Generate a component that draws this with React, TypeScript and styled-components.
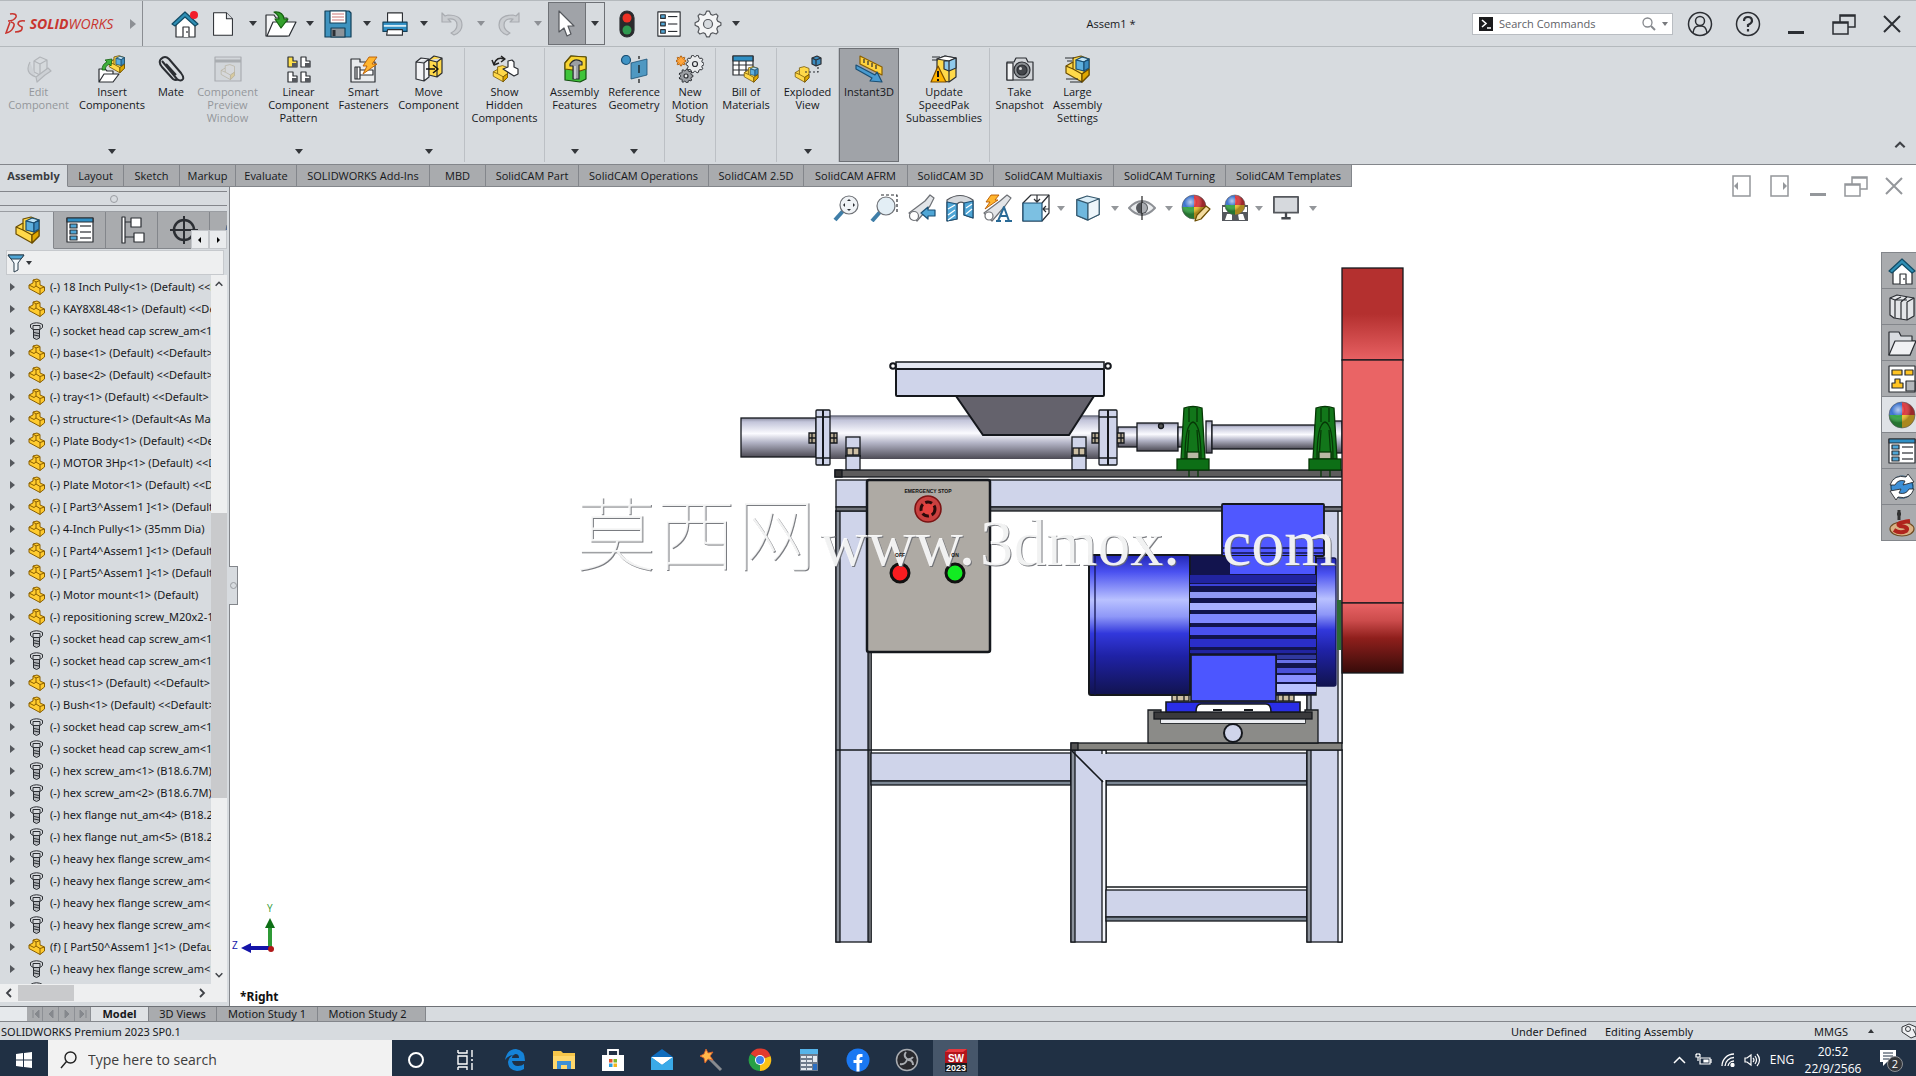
import React from "react";
import styled, { createGlobalStyle, css } from "styled-components";

const ui = `"Open Sans", "Noto Sans", "Noto Sans CJK SC", sans-serif`;
const wide = `"Noto Sans", "Open Sans", sans-serif`;

const Global = createGlobalStyle`
  * { box-sizing: border-box; }
  body { margin: 0; background: #d7dbdf; }
  button, input { font: inherit; color: inherit; }
  button { border: 0; padding: 0; background: none; }
  svg { display: block; flex: none; }
`;

const App_ = styled.div`
  height: 100vh;
  display: flex;
  flex-direction: column;
  overflow: hidden;
  font: 11px/13px ${ui};
  color: #16181b;
  background: #d7dbdf;
`;

/* ---------- title bar ---------- */
const TitleBar = styled.header`
  flex: none;
  height: 47px;
  display: flex;
  align-items: center;
  border-top: 1px solid #b4b9bd;
  border-bottom: 1px solid #b4b9bd;
`;
const Brand = styled.div`
  width: 143px;
  height: 100%;
  padding-left: 5px;
  display: flex;
  align-items: center;
  border-right: 1px solid #8a8d92;
  color: #c8352f;
  font: italic 14px/20px ${ui};
  b { font-weight: 700; }
`;
const BrandArrow = styled.span`
  margin-left: auto;
  margin-right: 6px;
  border-left: 6px solid #8d9095;
  border-top: 5px solid transparent;
  border-bottom: 5px solid transparent;
`;
const QuickBar = styled.div`
  display: flex;
  align-items: center;
  padding-left: 23px;
  height: 100%;
`;
const Quick = styled.button<{ $w: number }>`
  width: ${(p) => p.$w}px;
  height: 41px;
  display: flex;
  align-items: center;
  justify-content: center;
`;
const Caret = styled.span<{ $c?: string; $small?: boolean }>`
  display: block;
  border-top: ${(p) => (p.$small ? 4 : 5)}px solid ${(p) => p.$c || "#33363a"};
  border-left: ${(p) => (p.$small ? 3 : 4)}px solid transparent;
  border-right: ${(p) => (p.$small ? 3 : 4)}px solid transparent;
`;
const SelectBox = styled.div`
  display: flex;
  border: 1px solid #6e7176;
  margin-right: 5px;
  > :first-child { background: #a0a3a8; border-right: 1px solid #6e7176; }
`;
const DocTitle = styled.h1`
  flex: 1;
  margin: 0;
  text-align: center;
  font: 11px/13px ${ui};
`;
const SearchCommands = styled.label`
  width: 201px;
  height: 22px;
  display: flex;
  align-items: center;
  gap: 6px;
  padding: 0 4px 0 6px;
  background: #fff;
  border: 1px solid #b9bdc2;
  input {
    flex: 1;
    min-width: 0;
    border: 0;
    outline: 0;
    padding: 0;
    background: none;
  }
  input::placeholder { color: #5e6166; opacity: 1; }
`;
const WindowButtons = styled.div`
  display: flex;
  padding: 0 0 0 3px;
`;

/* ---------- ribbon ---------- */
const Ribbon = styled.div`
  flex: none;
  height: 117px;
  display: flex;
  padding: 1px 0 2px 3px;
`;
const Tool = styled.button<{ $w: number; $on?: boolean; $off?: boolean }>`
  width: ${(p) => p.$w}px;
  display: flex;
  flex-direction: column;
  align-items: center;
  padding: 7px 0 8px;
  white-space: pre;
  text-align: center;
  color: ${(p) => (p.$off ? "#94979b" : "#16181b")};
  svg { opacity: ${(p) => (p.$off ? 0.55 : 1)}; margin-bottom: 2px; }
  ${Caret} { margin-top: auto; }
  ${(p) => p.$on && css`background: #a0a3a8; outline: 1px solid #6e7176; outline-offset: -1px;`}
`;
const Sep = styled.i`
  width: 1px;
  background: #bcc0c5;
`;
const Collapse = styled.button`
  margin: auto 9px 10px auto;
`;
const TabRow = styled.div`
  flex: none;
  height: 23px;
  display: flex;
  background: #fff;
  border-top: 1px solid #83868b;
`;
const Tab = styled.button<{ $w: number; $on?: boolean }>`
  width: ${(p) => p.$w}px;
  white-space: nowrap;
  border-right: 1px solid #83868b;
  border-bottom: 1px solid #83868b;
  background: ${(p) => (p.$on ? "#d7dbdf" : "#a9abae")};
  font-weight: ${(p) => (p.$on ? 700 : 400)};
  ${(p) => p.$on && css`border-bottom-color: #d7dbdf; color: #3a3d41;`}
`;
const DocButtons = styled.div`
  margin: 9px 3px 0 auto;
  height: 24px;
  display: flex;
  z-index: 1;
`;

/* ---------- workspace ---------- */
const Workspace = styled.main`
  flex: 1;
  min-height: 0;
  display: flex;
  position: relative;
`;
const Panel = styled.aside`
  width: 230px;
  flex: none;
  display: flex;
  flex-direction: column;
  border-right: 1px solid #83868b;
  position: relative;
  padding-right: 2px;
`;
const Grip = styled.div`
  flex: none;
  height: 15px;
  margin: 4px 0 5px;
  border-top: 1px solid #83868b;
  border-bottom: 1px solid #83868b;
  display: flex;
  align-items: center;
  justify-content: center;
  &::after {
    content: "";
    width: 6px;
    height: 6px;
    border: 1px solid #9a9da2;
    border-radius: 50%;
  }
`;
const PanelTabs = styled.div`
  flex: none;
  height: 38px;
  display: flex;
  overflow: hidden;
  position: relative;
  border-top: 1px solid #9a9da2;
`;
const PanelTab = styled.button<{ $on?: boolean }>`
  width: ${(p) => (p.$on ? 54 : 52)}px;
  padding-left: ${(p) => (p.$on ? 3 : 0)}px;
  flex: none;
  display: flex;
  align-items: center;
  justify-content: center;
  border-right: 1px solid #83868b;
  border-bottom: 1px solid ${(p) => (p.$on ? "#d7dbdf" : "#83868b")};
  background: ${(p) => (p.$on ? "#d7dbdf" : "#a9abae")};
`;
const TabScroll = styled.div`
  position: absolute;
  right: 0;
  bottom: 0;
  display: flex;
  button {
    width: 18px;
    height: 19px;
    background: #e9ebed;
    border: 1px solid #c3c6ca;
    display: flex;
    align-items: center;
    justify-content: center;
  }
`;
const Filter = styled.div`
  flex: none;
  height: 25px;
  margin: 1px 3px 0 6px;
  background: #eeeff0;
  border: 1px solid #c6c9cd;
  display: flex;
  align-items: center;
  gap: 1px;
`;
const TreeWrap = styled.div`
  flex: 1;
  min-height: 0;
  display: flex;
`;
const Tree = styled.ul`
  flex: 1;
  min-width: 0;
  margin: 0;
  padding: 1px 0 0 10px;
  list-style: none;
  overflow: hidden;
`;
const Node = styled.li`
  height: 22px;
  display: flex;
  align-items: center;
  white-space: pre;
  font: 11px/22px ${wide};
  svg { margin: 0 4px 0 13px; }
  button {
    border-left: 5px solid #55585d;
    border-top: 4px solid transparent;
    border-bottom: 4px solid transparent;
  }
`;
const VScroll = styled.div`
  width: 16px;
  background: #eeeff0;
  display: flex;
  flex-direction: column;
  align-items: center;
  justify-content: space-between;
  padding: 4px 0;
`;
const VThumb = styled.div`
  width: 100%;
  height: 285px;
  margin: 224px 0 auto;
  background: #c9cacc;
`;
const HScroll = styled.div`
  flex: none;
  height: 18px;
  margin-bottom: 4px;
  background: #eeeff0;
  display: flex;
  align-items: center;
  padding: 0 19px 0 3px;
`;
const HThumb = styled.div`
  width: 56px;
  height: 16px;
  margin: 0 auto 0 3px;
  background: #c9cacc;
`;
const Splitter = styled.button`
  position: absolute;
  left: 100%;
  top: 379px;
  width: 9px;
  height: 39px;
  background: #d7dbdf;
  border: 1px solid #83868b;
  border-left: 0;
  display: flex;
  align-items: center;
  justify-content: center;
  &::after {
    content: "";
    width: 5px;
    height: 5px;
    border: 1px solid #9a9da2;
    border-radius: 50%;
  }
`;
const Viewport = styled.section`
  flex: 1;
  min-width: 0;
  display: flex;
  flex-direction: column;
  background: #fff;
`;
const Hud = styled.div`
  flex: none;
  height: 42px;
  display: flex;
  align-items: center;
  justify-content: center;
`;
const HudButton = styled.button<{ $w: number }>`
  width: ${(p) => p.$w}px;
  display: flex;
  align-items: center;
  justify-content: center;
`;
const Scene = styled.svg`
  flex: 1;
  min-height: 0;
  width: 100%;
`;
const Watermark = styled.g`
  fill: #fff;
  fill-opacity: 0.9;
  filter: drop-shadow(1px 1px 0 #6c6e73);
`;
const TaskPane = styled.nav`
  position: absolute;
  right: 0;
  top: 65px;
  width: 35px;
  border: 1px solid #83868b;
  border-right: 0;
  border-bottom: 0;
`;
const PaneButton = styled.button<{ $on?: boolean }>`
  width: 100%;
  height: 36px;
  display: flex;
  align-items: center;
  justify-content: flex-end;
  background: ${(p) => (p.$on ? "#dfe2e6" : "#a9abae")};
  border-bottom: 1px solid #83868b;
`;

/* ---------- bottom ---------- */
const BottomTabs = styled.div`
  flex: none;
  height: 16px;
  display: flex;
  border-top: 1px solid #6e7176;
  border-bottom: 1px solid #83868b;
  font-family: ${wide};
`;
const Blank = styled.div`
  width: 27px;
  background: #e6e9ec;
`;
const NavButton = styled.button`
  width: 16px;
  background: #a9abae;
  border-right: 1px solid #8d9095;
  color: #85888d;
  display: flex;
  align-items: center;
  justify-content: center;
`;
const BottomTab = styled.button<{ $w: number; $on?: boolean }>`
  width: ${(p) => p.$w}px;
  padding-bottom: 2px;
  white-space: nowrap;
  border-right: 1px solid #83868b;
  background: ${(p) => (p.$on ? "#dfe2e5" : "#a9abae")};
  font-weight: ${(p) => (p.$on ? 700 : 400)};
  &:last-child { padding-right: 8px; }
`;
const Status = styled.footer`
  flex: none;
  height: 18px;
  display: flex;
  align-items: center;
  padding-left: 1px;
  white-space: nowrap;
  font-family: ${wide};
`;
const StatusItem = styled.span<{ $w: number }>`
  width: ${(p) => p.$w}px;
`;
const Grow = styled.span`
  flex: 1;
`;
const Taskbar = styled.div`
  flex: none;
  height: 36px;
  display: flex;
  align-items: center;
  background: #203044;
  color: #fff;
`;
const Start = styled.button`
  width: 48px;
  height: 100%;
  padding-top: 3px;
  display: flex;
  align-items: center;
  justify-content: center;
`;
const SearchBox = styled.label`
  width: 344px;
  height: 100%;
  padding-top: 3px;
  display: flex;
  align-items: center;
  gap: 11px;
  padding-left: 12px;
  background: #f2f2f2;
  color: #3a3a3a;
  font-size: 14px;
  input {
    flex: 1;
    border: 0;
    outline: 0;
    padding: 0;
    background: none;
  }
  input::placeholder { color: #3d3d3d; opacity: 1; }
`;
const Apps = styled.div`
  flex: 1;
  height: 100%;
  display: flex;
`;
const AppButton = styled.button<{ $on?: boolean }>`
  width: 49px;
  height: 100%;
  padding-top: 3px;
  display: flex;
  align-items: center;
  justify-content: center;
  ${(p) => p.$on && css`width: 45px; margin-left: 2px; background: #46566a;`}
`;
const Tray = styled.div`
  display: flex;
  align-items: center;
  padding-top: 3px;
  font-size: 12px;
  line-height: 17px;
`;
const TrayItem = styled.button<{ $w: number }>`
  width: ${(p) => p.$w}px;
  display: flex;
  justify-content: center;
  text-align: center;
`;

/* ---------- icon pieces ---------- */
type IP = { w?: number; h?: number; vb?: string; children?: React.ReactNode };
const I = ({ w = 28, h = 28, vb, children }: IP) => (
  <svg width={w} height={h} viewBox={vb || "0 0 28 28"} fill="none" stroke="#2b2e33" strokeWidth="1.2" strokeLinejoin="round" aria-hidden="true">
    {children}
  </svg>
);
const PartShape = ({ top = "#ffd94a", cube = false }: { top?: string; cube?: boolean }) => (
  <g stroke="#6b4d00" strokeWidth="1.2" strokeLinejoin="round">
    <path d="M2 11 L9 7 V3 L17 1 L25 4 V20 L18 27 L2 18Z" fill={top} />
    <path d="M2 11 L9 14 L9 7 M9 14 L18 19 V27 M18 19 L25 14" fill="none" />
    <path d="M18 19 L25 14 V20 L18 27Z" fill="#e0a800" />
    {cube && (
      <g stroke="#1b4f74">
        <path d="M12 5 L18 2 L25 4 L20 7Z" fill="#bfe3f5" />
        <path d="M12 5 L20 7 V16 L12 14Z" fill="#5fb0de" />
        <path d="M20 7 L25 4 V13 L20 16Z" fill="#3c8cc0" />
      </g>
    )}
  </g>
);
const PartSmall = () => (
  <svg width="18" height="18" viewBox="0 0 18 18" stroke="#8a5f00" strokeLinejoin="round" aria-hidden="true">
    <path d="M1 7 L5 5 V2 L9 1 L12 2.500 V7 L16.500 9 V13 L12 16.500 L1 10.500Z" fill="#ffcb2e" />
    <path d="M1 7 L6 9.500 L8 8 V4 L12 2.500 M8 8 L12 10.500 L16.500 9 M12 10.500 V16.500 M5 2 L8 4" fill="none" />
  </svg>
);
const ScrewSmall = () => (
  <svg width="18" height="18" viewBox="0 0 18 18" stroke="#2b2e33" aria-hidden="true">
    <path d="M2.500 2.500 Q8.500 -1 14.500 2.500 V5.500 L12 7.500 H5 L2.500 5.500Z" fill="#d6d9dd" />
    <path d="M5.500 7.500 H11.500 V16 L8.500 17.500 L5.500 16Z" fill="#b5b8bc" />
    <path d="M5 3.500 H12 V7 M5 3.500 V7 M6 10.500 L11 11.500 M6 13 L11 14" fill="none" />
  </svg>
);
const Ball = ({ x = 14, y = 13, r = 12 }: { x?: number; y?: number; r?: number }) => (
  <g stroke="none">
    <path d={`M${x} ${y} V${y - r} A${r} ${r} 0 0 1 ${x + r} ${y}Z`} fill="#dd3a3f" />
    <path d={`M${x} ${y} H${x + r} A${r} ${r} 0 0 1 ${x} ${y + r}Z`} fill="#f2c22c" />
    <path d={`M${x} ${y} V${y + r} A${r} ${r} 0 0 1 ${x - r} ${y}Z`} fill="#37a545" />
    <path d={`M${x} ${y} H${x - r} A${r} ${r} 0 0 1 ${x} ${y - r}Z`} fill="#3d74cf" />
    <circle cx={x} cy={y} r={r} fill="url(#shine)" stroke="#55585d" strokeWidth="0.600" />
  </g>
);
const gearPath = (cx: number, cy: number, r: number, n: number, d: number) => {
  const pts: string[] = [];
  for (let i = 0; i < n * 4; i++) {
    const a = ((i - 0.5) / (n * 4)) * Math.PI * 2;
    const q = i % 4 < 2 ? r : r - d;
    pts.push(`${(cx + Math.cos(a) * q).toFixed(1)} ${(cy + Math.sin(a) * q).toFixed(1)}`);
  }
  return "M" + pts.join("L") + "Z";
};
const House = ({ dot = false }) => (
  <I>
    <path d="M5 13 V27 H24 V13 L14 4Z" fill="#fff" />
    <path d="M1 14 L14 2 L27 14 L24 16 L14 7 L4 16Z" fill="#2f8fb5" stroke="#124c66" />
    <path d="M12 27 V17 H18 V27" fill="#fff" />
    <path d="M16 21 V23" />
    {dot && <circle cx="23" cy="5" r="4" fill="#f21d2b" stroke="none" />}
  </I>
);
const ListIcon = ({ blue = false }) => (
  <I>
    <path d="M1 2 H27 V26 H1Z" fill="#fff" />
    {blue && <path d="M1 2 H27 V6 H1Z" fill="#2f8fc4" />}
    {[8, 14, 20].map((y) => (
      <g key={y}>
        <path d={`M4 ${y} H11 V${y + 4} H4Z`} fill="#4fa6d6" />
        <path d={`M14 ${y + 2} H25`} />
      </g>
    ))}
  </I>
);

const icons: Record<string, React.ReactNode> = {
  home: <House dot />,
  doc: <I w={24}><path d="M3 1 H18 L25 8 V27 H3Z" fill="#fff" /><path d="M18 1 V8 H25" fill="#d9dce0" /></I>,
  open: (
    <I w={32} vb="0 0 32 28"><path d="M1 5 H9 L11 8 H22 V26 H1Z" fill="#f4f5f6" /><path d="M8 12 H31 L24 26 H2Z" fill="#fff" />
      <path d="M9 2 Q18 1 19 9 H23 L16 18 L10 9 H14 Q14 5 9 2Z" fill="#33a02c" stroke="#14610f" /></I>
  ),
  save: (
    <I><path d="M1 1 H25 L27 3 V27 H1Z" fill="#3f93bf" stroke="#123f58" /><path d="M6 1 H22 V13 H6Z" fill="#fff" stroke="#123f58" />
      <path d="M8 4 H20 M8 7 H20 M8 10 H20" stroke="#c77" /><path d="M7 18 H21 V27 H7Z" fill="#8d9399" stroke="#123f58" /><path d="M10 20 V26" strokeWidth="3" /></I>
  ),
  print: (
    <I w={26}><path d="M6 2 H22 V14 H6Z" fill="#fff" /><path d="M1 12 H27 V22 H1Z" fill="#2f8fc4" stroke="#123f58" /><path d="M2 16 H26" stroke="#d5ecf7" strokeWidth="2" /><path d="M6 20 H22 V26 H5Z" fill="#fff" /></I>
  ),
  undo: <I w={22} vb="0 0 22 24"><path d="M1 1 V10 H10 L7 7 Q16 6 16 13 Q16 18 10 21 L13 23 Q21 20 21 13 Q21 3 7 3 L4 4Z" fill="#c9ccd0" stroke="#a9acb1" /></I>,
  redo: <I w={22} vb="0 0 22 24"><path d="M21 1 V10 H12 L15 7 Q6 6 6 13 Q6 18 12 21 L9 23 Q1 20 1 13 Q1 3 15 3 L18 4Z" fill="#c9ccd0" stroke="#a9acb1" /></I>,
  cursor: <I w={20} vb="0 0 20 28"><path d="M2 1 V22 L7 18 L10 26 L14 24 L11 16 H17Z" fill="#fff" stroke="#55585d" /></I>,
  traffic: <I w={16} vb="0 0 16 28"><rect x="1" y="1" width="14" height="26" rx="7" fill="#2a2a2c" /><circle cx="8" cy="8" r="4.500" fill="#ee3124" stroke="none" /><circle cx="8" cy="20" r="4.500" fill="#2f9950" stroke="none" /></I>,
  list: <I w={26}><path d="M2 1 H26 V27 H2Z" fill="#fff" />{[4, 12, 20].map((y) => <g key={y}><path d={`M5 ${y} H10 V${y + 4} H5Z`} fill="#4fa6d6" /><path d={`M13 ${y + 2} H23`} /></g>)}</I>,
  gear: <I><path d={gearPath(14, 14, 13, 8, 3)} fill="#f4f5f6" stroke="#55585d" /><circle cx="14" cy="14" r="4.500" fill="#d7dbdf" stroke="#55585d" /></I>,

  edit: <I><path d="M9 6 L15 2 L22 5 V16 L15 20 L9 17Z M9 6 L15 9 L22 5 M15 9 V20" fill="#d5d8db" stroke="#94979b" /><path d="M5 7 Q-1 18 11 22 M20 20 L12 27 L11 22 L23 13 L26 16Z" fill="#c6c9cd" stroke="#94979b" /></I>,
  insert: <I><g transform="translate(10 0) scale(.66)"><PartShape cube /></g><path d="M1 27 V14 H7 L9 16 H15 V19 M1 27 L6 19 H21 L15 27Z" fill="#fff" /><path d="M4 15 Q4 9 9 7 L7 5 L14 4 L13 11 L11 9 Q7 11 7 15Z" fill="#3fae3a" stroke="#14610f" strokeWidth="0.800" /></I>,
  mate: <I><path d="M5 6 L20 24 Q24 27 26 24 Q27 22 24 18 L12 4 Q8 0 4 4 Q1 7 5 12 L16 24 Q19 26 21 24 M9 9 L19 20" stroke="#2b2e33" strokeWidth="2" /></I>,
  preview: <I><path d="M1 2 H27 V26 H1Z" fill="#cfd2d6" stroke="#85888d" /><path d="M1 6 H27" stroke="#85888d" strokeWidth="3" /><g transform="translate(6 9) scale(.58)" opacity=".5"><PartShape top="#ddd" /></g></I>,
  linear: <I>{[[3, 2], [16, 2], [3, 17], [16, 17]].map(([x, y], i) => <g key={i}><path d={`M${x} ${y} H${x + 5} V${y + 4} H${x + 9} V${y + 10} H${x}Z`} fill={i ? "#fff" : "#ffe04a"} /><path d={`M${x + 4} ${y + 6} H${x + 9} V${y + 10} H${x + 4}Z`} fill="#55585d" stroke="none" /></g>)}</I>,
  smart: <I><path d="M1 4 H10 V7 H25 V27 H1Z" fill="#e9ebed" /><path d="M5 12 H10 V24 H5Z M10 15 H23 V20 H10 M7 12 V24" fill="#fff" /><path d="M19 2 H27 L22 9 H27 L13 19 L17 11 H13Z" fill="#ffb52e" stroke="#b85a00" strokeWidth="0.900" /></I>,
  move: <I><path d="M1 7 L6 3 L14 4 V22 L9 26 L1 24Z M1 7 L9 8 L14 4 M9 8 V26" fill="#f2f3f5" /><path d="M14 5 L19 1 L27 3 V18 L22 22 L14 20Z M14 5 L22 7 L27 3 M22 7 V22" fill="#ffd94a" /><path d="M11 14 H20 M18 10 L23 14 L18 18" stroke="#111" strokeWidth="1.600" /></I>,
  show: <I><g transform="translate(1 10) scale(.62)"><PartShape /></g><path d="M12 14 L17 12 V6 L21 5 L23 7 V12 L27 14 V19 L23 21Z" fill="#fff" /><path d="M3 9 Q6 1 13 4 M1 5 L3 10 L8 8 M10 1 L14 4 L10 7" stroke="#222" strokeWidth="1.500" /></I>,
  asmfeat: <I><path d="M4 8 L10 1 L25 2 V24 L19 27 L4 25Z" fill="#3fc43a" stroke="#124d0f" /><path d="M4 8 L10 1 L25 2 V14 L19 16 L4 14Z" fill="#f7d531" stroke="#6b4d00" /><path d="M9 9 Q14 2 21 7 V10 H18 V24 H12 V11 H9Z" fill="#9c9fa4" /><path d="M14 11 V24" stroke="#e3e5e8" /></I>,
  refgeo: <I><circle cx="6" cy="5" r="4.500" fill="#3f93c4" stroke="#1b4f74" /><path d="M11 8 L27 4 V20 L11 24Z" fill="#4f98c2" stroke="#1b4f74" strokeWidth="0.800" /><path d="M19 1 V4 M19 10 V18 M19 24 V28" stroke="#111" /></I>,
  motion: <I><path d={gearPath(5, 6, 5, 8, 1.6)} fill="#ffa53c" stroke="#a35200" strokeWidth="0.800" /><path d={gearPath(19, 9, 9, 10, 1.6)} fill="#e9ebed" strokeWidth="1" /><circle cx="19" cy="9" r="2.500" /><path d={gearPath(10, 21, 7, 9, 1.6)} fill="#9c9fa4" strokeWidth="1" /><circle cx="10" cy="21" r="2" fill="#eee" /></I>,
  bom: <I><path d="M1 1 H21 V20 H1Z" fill="#fff" /><path d="M1 1 H21 V6 H1Z" fill="#2f8fc4" /><path d="M1 10 H21 M1 15 H21 M7 6 V20 M14 6 V20" /><g transform="translate(11 11) scale(.6)"><PartShape cube /></g></I>,
  explode: <I><g transform="translate(0 11) scale(.6)"><PartShape /></g><path d="M18 3 L23 1 L27 3 V9 L22 11 L18 9Z" fill="#3c8cc0" /><path d="M18 3 L22 5 L27 3 M22 5 V11" /><path d="M11 17 H24 V12" strokeDasharray="2 2" /></I>,
  instant: <I><path d="M5 1 L27 12 V20 L5 9Z" fill="#ffd23e" stroke="#8a5f00" /><path d="M9 4 V8 M13 6 V10 M17 8 V12 M21 10 V14" /><path d="M1 10 L20 20 L22 17 L27 27 L15 26 L17 23 L1 14Z" fill="#4a9bd0" stroke="#1b4f74" /></I>,
  update: <I><path d="M7 4 L15 1 L26 3 V22 L19 27 L7 25Z" fill="#ffd94a" /><path d="M7 4 L15 1 L26 3 L19 6Z" fill="#fff" /><path d="M14 6 L19 6 L26 3 V13 L19 16 L14 14Z" fill="#8fc9ea" /><path d="M19 6 V27 M2 2 H10 M2 5 H8" /><path d="M8 11 L16 27 H1Z" fill="#ffb400" stroke="#7a4d00" /><path d="M8 16 V22 M8 24 V26" stroke="#111" strokeWidth="2" /></I>,
  camera: <I><path d="M1 7 H8 L10 3 H20 L22 7 H27 V25 H1Z" fill="#d2d5d9" /><path d="M1 8 H7 V25 H1Z" fill="#f4f5f6" /><circle cx="16" cy="15" r="8" fill="#8c9094" /><circle cx="16" cy="15" r="5" fill="#44474c" /><circle cx="14.500" cy="13.500" r="1.500" fill="#ddd" stroke="none" /></I>,
  large: <I><PartShape cube /><path d="M1 3 H10 M3 6 H8 M2 24 H14 M6 27 H18" /></I>,

  zoomfit: <I><path d="M11 17 L3 26" stroke="#3f7ea8" strokeWidth="4" /><circle cx="17" cy="11" r="9" fill="#f0f3f6" stroke="#6e7176" /><path d="M15 7 L17 5 L19 7Z M15 15 L17 17 L19 15Z M13 9 L11 11 L13 13Z M21 9 L23 11 L21 13Z" fill="#2b2e33" stroke="none" /></I>,
  zoomarea: <I><path d="M11 1 H27 V18" strokeDasharray="3 2" /><path d="M10 18 L2 27" stroke="#3f7ea8" strokeWidth="4" /><circle cx="16" cy="12" r="9" fill="#e3eef5" stroke="#6e7176" /></I>,
  prev: <I><path d="M1 19 L17 7 L22 1 L26 4 L22 12 L9 27Z" fill="#e3e5e8" stroke="#6e7176" /><circle cx="6" cy="22" r="4.500" fill="#fff" stroke="#6e7176" /><path d="M27 16 H20 V13 L13 19 L20 25 V22 H27Z" fill="#4fa6d6" stroke="#1b4f74" /></I>,
  section: <I><path d="M1 6 Q14 -3 27 6 V24 L18 21 V9 Q14 7 11 10 V25 L1 27Z" fill="#d6d9dd" stroke="#55585d" /><path d="M1 8 L11 10 V25 L1 27Z M18 9 L27 7 V24 L18 21Z" fill="#4fa6d6" stroke="#1b4f74" /><path d="M2 15 L9 11 M2 21 L9 16 M2 26 L9 21 M20 14 L26 10 M20 20 L26 15" stroke="#fff" /></I>,
  dynamic: <I w={30} vb="0 0 30 28"><path d="M1 19 L17 7 L24 1 L28 4 L22 12 L9 27Z" fill="#e3e5e8" stroke="#6e7176" /><circle cx="6" cy="22" r="4" fill="#fff" stroke="#6e7176" /><path d="M8 1 H16 L12 6 H15 L2 15 L7 8 H3Z" fill="#ffb52e" stroke="#b85a00" strokeWidth="0.900" /><path d="M13 27 H18 M22 27 H29 M15 27 L21 13 L26 27 M18 22 H24" stroke="#2a6a96" strokeWidth="2" /></I>,
  orient: <I><path d="M1 9 L9 1 H27 V19 L20 27 H1Z" fill="#fff" /><path d="M1 9 H20 V27 H1Z" fill="#7cc0e2" stroke="#1b4f74" /><path d="M20 9 L27 1 M15 1 V7 M12 5 L15 8 L18 5 M27 15 H21 M24 12 L21 15 L24 18" /></I>,
  style: <I w={26}><path d="M2 5 L13 1 L26 4 V21 L13 27 L2 22Z" fill="#dceef8" stroke="#33566b" /><path d="M2 5 L14 9 V27 L2 22Z" fill="#6fb8de" stroke="#33566b" /><path d="M14 9 L26 4 V21 L14 27Z" fill="#eef6fb" stroke="#33566b" /></I>,
  eye: <I><path d="M1 14 Q14 0 27 14 Q14 28 1 14Z" fill="#e9ebed" stroke="#8d9095" strokeWidth="2" /><circle cx="14" cy="14" r="6" fill="#55585d" stroke="none" /><path d="M14 2 V26" stroke="#222" /><path d="M14 9 A5 5 0 0 1 14 19Z" fill="#a9acb1" stroke="none" /></I>,
  appear: <I w={30} vb="0 0 30 28"><Ball x={13} y={13} r={12} /><path d="M14 27 L16 21 L25 12 L29 15 L20 25Z" fill="#f3dca0" stroke="#6b4d00" /></I>,
  scene: <I><path d="M1 11 H27 V27 H1Z" fill="#55585d" stroke="none" /><path d="M2 13 H7 V18 H2Z M21 13 H26 V18 H21Z M6 20 H11 V26 H4Z M17 20 H22 L24 26 H18Z" fill="#fff" stroke="none" /><Ball x={14} y={11} r={10} /></I>,
  monitor: <I w={26}><path d="M1 2 H27 V19 H1Z" fill="#d6d9dd" stroke="#55585d" strokeWidth="2" /><path d="M14 19 V25 M9 25 H19" stroke="#44474c" strokeWidth="2.500" /></I>,

  library: <I><path d="M2 5 L9 2 L26 5 V23 L19 27 L6 25 L2 22Z" fill="#e3e5e8" /><path d="M2 5 L7 7 V25 M7 7 L13 4 M13 9 V26 M13 9 L19 4 M19 9 V27 M19 9 L26 5 M7 7 H19" /></I>,
  folder: <I><path d="M1 3 H11 L13 7 H24 V12 H27 L22 26 H1Z" fill="#d9dce0" /><path d="M7 12 H28 L22 26 H1Z" fill="#f0f1f3" /></I>,
  palette: <I><path d="M1 1 H27 V27 H1Z" fill="#fff" /><path d="M4 5 H14 V10 H4Z M17 5 H25 V10 H17Z M7 14 H12 V18 H15 V23 H4 V18 H7Z" fill="#ffc423" /><path d="M18 16 H27 V26 H18Z" fill="#b3b6ba" /></I>,
  ball: <I><Ball x={14} y={14} r={13} /></I>,
  forum: <I><circle cx="14" cy="14" r="11" fill="#3d8fd6" stroke="#1b4f74" /><path d="M2 12 Q6 1 18 4 L20 1 L26 9 L15 12 L17 8 Q10 6 7 12Z M26 16 Q22 27 10 24 L8 27 L2 18 L13 16 L11 20 Q18 22 21 16Z" fill="#fff" strokeWidth="0.900" /></I>,
  cam: <I><ellipse cx="14" cy="20" rx="12" ry="7" fill="#d9b184" stroke="#6e4a22" /><path d="M22 12 Q6 14 12 17 Q22 18 18 22 Q12 25 6 21" stroke="#b0241c" strokeWidth="4" /><path d="M11 1 V11 M9 5 H13" stroke="#333" strokeWidth="3" /></I>,
};

const Logo = () => (
  <svg width="21" height="22" viewBox="0 0 21 22" fill="none" stroke="#c8352f" strokeWidth="1.600" aria-hidden="true">
    <path d="M5 1 Q12 0 11 4 Q9 8 3 8 M6 9 Q11 10 8 15 Q6 19 1 20 L5 9 M20 8 Q13 7 13 11 Q14 13 17 14 Q18 19 10 19" />
  </svg>
);

const WinIcon = ({ kind, c = "#2b2e33" }: { kind: string; c?: string }) => (
  <svg width="26" height="26" viewBox="0 0 26 26" fill="none" stroke={c} strokeWidth="1.500" aria-hidden="true">
    {kind === "user" && <><circle cx="13" cy="13" r="11.500" /><circle cx="13" cy="10" r="4.500" /><path d="M6 22 Q7 14 13 15 Q19 14 20 22" /></>}
    {kind === "help" && <><circle cx="13" cy="13" r="11.500" /><path d="M9 10 Q9 6 13 6 Q17 6 17 10 Q17 12 13 14 V16 M13 18 V20.500" strokeWidth="2.200" /></>}
    {kind === "min" && <path d="M5 21.500 H21" strokeWidth="3" />}
    {kind === "restore" && <path d="M2 11 H17 V23 H2Z M9 11 V4 H24 V16 H17 M9 5 H24 M2 12 H17" />}
    {kind === "close" && <path d="M5 5 L21 21 M21 5 L5 21" strokeWidth="2" />}
    {kind === "left" && <><path d="M4 3 H21 V23 H4Z" /><path d="M9 9 L5 13 L9 17Z" fill={c} stroke="none" /></>}
    {kind === "right" && <><path d="M4 3 H21 V23 H4Z" /><path d="M16 9 L20 13 L16 17Z" fill={c} stroke="none" /></>}
  </svg>
);
const Chevron = ({ d, s = 12 }: { d: string; s?: number }) => (
  <svg width={s} height={s} viewBox="0 0 12 12" fill="none" stroke="#3f4247" strokeWidth="1.800" aria-hidden="true"><path d={d} /></svg>
);
const UP = "M2 8 L6 4 L10 8", DOWN = "M2 4 L6 8 L10 4", LEFT = "M8 2 L4 6 L8 10", RIGHT = "M4 2 L8 6 L4 10";

/* ---------- data ---------- */
const quick: [string, number, string?][] = [
  ["home", 38], ["doc", 38, "#33363a"], ["open", 36, "#33363a"], ["save", 36, "#33363a"], ["print", 36, "#33363a"], ["undo", 36, "#8d9095"], ["redo", 36, "#8d9095"],
];
type T = { i: string; t: string; w: number; c?: boolean; on?: boolean; off?: boolean } | null;
const tools: T[] = [
  { i: "edit", t: "Edit\nComponent", w: 71, off: true },
  { i: "insert", t: "Insert\nComponents", w: 76, c: true },
  { i: "mate", t: "Mate", w: 42 },
  { i: "preview", t: "Component\nPreview\nWindow", w: 71, off: true },
  { i: "linear", t: "Linear\nComponent\nPattern", w: 71, c: true },
  { i: "smart", t: "Smart\nFasteners", w: 59 },
  { i: "move", t: "Move\nComponent", w: 71, c: true },
  null,
  { i: "show", t: "Show\nHidden\nComponents", w: 79 },
  null,
  { i: "asmfeat", t: "Assembly\nFeatures", w: 59, c: true },
  { i: "refgeo", t: "Reference\nGeometry", w: 60, c: true },
  null,
  { i: "motion", t: "New\nMotion\nStudy", w: 50 },
  null,
  { i: "bom", t: "Bill of\nMaterials", w: 60 },
  null,
  { i: "explode", t: "Exploded\nView", w: 61, c: true },
  null,
  { i: "instant", t: "Instant3D", w: 60, on: true },
  { i: "update", t: "Update\nSpeedPak\nSubassemblies", w: 90 },
  null,
  { i: "camera", t: "Take\nSnapshot", w: 59 },
  { i: "large", t: "Large\nAssembly\nSettings", w: 57 },
];
const tabs: [string, number][] = [
  ["Assembly", 68], ["Layout", 56], ["Sketch", 56], ["Markup", 56], ["Evaluate", 61], ["SOLIDWORKS Add-Ins", 133], ["MBD", 56],
  ["SolidCAM Part", 93], ["SolidCAM Operations", 130], ["SolidCAM 2.5D", 95], ["SolidCAM AFRM", 104], ["SolidCAM 3D", 86],
  ["SolidCAM Multiaxis", 120], ["SolidCAM Turning", 112], ["SolidCAM Templates", 126],
];
const S = "(-) socket head cap screw_am<1>", H = "(-) heavy hex flange screw_am<1>";
const tree = [
  "(-) 18 Inch Pully<1> (Default) <<Default>", "(-) KAY8X8L48<1> (Default) <<Default>", S, "(-) base<1> (Default) <<Default>",
  "(-) base<2> (Default) <<Default>", "(-) tray<1> (Default) <<Default>", "(-) structure<1> (Default<As Machined>", "(-) Plate Body<1> (Default) <<Default>",
  "(-) MOTOR 3Hp<1> (Default) <<Default>", "(-) Plate Motor<1> (Default) <<Default>", "(-) [ Part3^Assem1 ]<1> (Default)", "(-) 4-Inch Pully<1> (35mm Dia)",
  "(-) [ Part4^Assem1 ]<1> (Default)", "(-) [ Part5^Assem1 ]<1> (Default)", "(-) Motor mount<1> (Default)", "(-) repositioning screw_M20x2-1",
  S, S, "(-) stus<1> (Default) <<Default>", "(-) Bush<1> (Default) <<Default>", S, S, "(-) hex screw_am<1> (B18.6.7M)", "(-) hex screw_am<2> (B18.6.7M)",
  "(-) hex flange nut_am<4> (B18.2)", "(-) hex flange nut_am<5> (B18.2)", H, H, H, H, "(f) [ Part50^Assem1 ]<1> (Default)", H, H,
];
const hud: [string, number, boolean?][] = [
  ["zoomfit", 38], ["zoomarea", 38], ["prev", 38], ["section", 38], ["dynamic", 38], ["orient", 38, true], ["style", 42, true],
  ["eye", 42, true], ["appear", 42], ["scene", 36, true], ["monitor", 42, true],
];

/* ---------- the machine ---------- */
const BEAM = "#cfd4ea";
const Post = ({ x }: { x: number }) => (
  <g>
    <rect x={x} y="437" width="14" height="33" fill={BEAM} />
    <rect x={x + 1} y="448" width="12" height="7" fill="#cdbfa4" />
    <path d={`M${x - 1} 456 H${x + 15} M${x + 7} 448 V455 M${x + 3} 470 V477 M${x + 12} 470 V477`} />
  </g>
);
const Flange = ({ x, w }: { x: number; w: number }) => (
  <g strokeWidth="1.300">
    <path d={`M${x - 7} 433 H${x} V443 H${x - 7}Z M${x - 7} 438 H${x} M${x - 4} 433 V443`} fill="#b7ab93" />
    <path d={`M${x + w} 433 H${x + w + 7} V443 H${x + w}Z M${x + w} 438 H${x + w + 7} M${x + w + 4} 433 V443`} fill="#b7ab93" />
    <rect x={x} y="410" width={w} height="55" rx="1" fill={BEAM} />
    <path d={`M${x} 417 H${x + w} M${x} 458 H${x + w}`} />
    <path d={`M${x + w / 2} 410 V465`} strokeWidth="2" />
  </g>
);
const Bearing = ({ x }: { x: number }) => (
  <g stroke="#063806">
    <path d={`M${x - 9} 408 Q${x} 405 ${x + 9} 408 L${x + 12} 459 H${x - 12}Z`} fill="#12761a" />
    <path d={`M${x - 8} 459 Q${x - 8} 424 ${x} 422 Q${x + 8} 424 ${x + 8} 459 M${x - 4} 408 V422 M${x + 4} 408 V422 M${x - 4} 430 L${x - 6} 459 M${x + 4} 430 L${x + 6} 459`} />
    <rect x={x - 6} y="452" width="12" height="7" fill="#b9b9a4" />
    <rect x={x - 16} y="459" width="32" height="11" fill="#0d6f16" />
    <path d={`M${x - 4} 470 V477 M${x + 5} 470 V477`} />
  </g>
);
const fins: [number, number, string][] = [
  [575, 8, "#2124a0"], [584, 2, "#3c42d8"], [592, 6, "#8f98f5"], [603, 7, "#a8b0ff"], [614, 9, "#7f88ff"], [627, 8, "#4a51f0"], [639, 8, "#2a2ec8"], [650, 3, "#2124a0"],
];
const lowFins: [number, number, string][] = [[655, 4, "#30389e"], [660, 3, "#6870e8"], [668, 5, "#4a50d8"], [675, 7, "#8a90ff"], [684, 8, "#b8c0ff"]];
const Leg = ({ x, y, h, l = 4, r = 4 }: { x: number; y: number; h: number; l?: number; r?: number }) => (
  <g>
    <rect x={x} y={y} width="35" height={h} fill={BEAM} />
    <rect x={x} y={y} width={l} height={h} fill="#8b919b" />
    <rect x={x + 35 - r} y={y} width={r} height={h} fill="#f4f6fb" />
  </g>
);
const Machine = () => (
  <Scene viewBox="230 229 1686 777" preserveAspectRatio="xMidYMid meet" role="img" aria-label="Right view of the assembly">
    <defs>
      <linearGradient id="tube" x2="0" y2="1"><stop offset="0" stopColor="#8b8ca0" /><stop offset=".1" stopColor="#c3c5da" /><stop offset=".4" stopColor="#fbfbff" /><stop offset=".62" stopColor="#b5b6c8" /><stop offset="1" stopColor="#4d4b55" /></linearGradient>
      <linearGradient id="motor" x2="0" y2="1"><stop offset="0" stopColor="#2226b4" /><stop offset=".12" stopColor="#4a51f0" /><stop offset=".32" stopColor="#b9c1ff" /><stop offset=".44" stopColor="#8e97f8" /><stop offset=".56" stopColor="#3238dc" /><stop offset=".72" stopColor="#1f22a6" /><stop offset="1" stopColor="#11134f" /></linearGradient>
      <linearGradient id="redTop" x2="0" y2="1"><stop offset="0" stopColor="#b4302f" /><stop offset=".5" stopColor="#b4302f" /><stop offset="1" stopColor="#e86163" /></linearGradient>
      <linearGradient id="redLow" x2="0" y2="1"><stop offset="0" stopColor="#e96365" /><stop offset=".25" stopColor="#cc4c4c" /><stop offset=".5" stopColor="#8f1f1c" /><stop offset="1" stopColor="#360b09" /></linearGradient>
      <radialGradient id="shine" cx=".35" cy=".3"><stop offset="0" stopColor="#fff" stopOpacity=".65" /><stop offset=".5" stopColor="#fff" stopOpacity="0" /><stop offset="1" stopColor="#000" stopOpacity=".3" /></radialGradient>
    </defs>
    <g stroke="#15181d" strokeWidth="1.300" fill="none">
      <rect x="741" y="418" width="75" height="39" fill="url(#tube)" />
      <rect x="830" y="416" width="269" height="43" fill="url(#tube)" stroke="none" />
      <path d="M830 416 H1099" stroke="#6e7080" />
      <Flange x={816} w={14} />
      <rect x="1118" y="427" width="20" height="20" fill="url(#tube)" />
      <Flange x={1099} w={18} />
      <rect x="1137" y="423" width="41" height="28" fill="url(#tube)" />
      <circle cx="1161" cy="426" r="2.500" fill="#555" />
      <rect x="1178" y="427" width="8" height="20" fill="url(#tube)" />
      <rect x="1206" y="421" width="6" height="32" fill="url(#tube)" />
      <rect x="1212" y="425" width="103" height="24" fill="url(#tube)" />
      <rect x="1334" y="421" width="8" height="32" fill="url(#tube)" />
      <path d="M956 396 H1094 L1069 435 H983Z" fill="#64626c" strokeWidth="2" />
      <rect x="896" y="362" width="208" height="8" fill="#e3e6f0" strokeWidth="1.500" />
      <rect x="896" y="369" width="208" height="27" rx="1" fill={BEAM} strokeWidth="2" />
      <circle cx="893" cy="366" r="2.800" strokeWidth="2" /><circle cx="1108" cy="366" r="2.800" strokeWidth="2" />

      <Leg x={836} y={511} h={431} r={2} /><path d="M868 653 V942" /><path d="M836 750 H871" />
      <Leg x={1307} y={511} h={232} />
      <rect x="836" y="480" width="506" height="27" fill={BEAM} />
      <rect x="836" y="507" width="506" height="4" fill="#6f7278" />
      <Post x={846} /><Post x={1072} />
      <rect x="835" y="470" width="507" height="7" fill="#5d5c5c" />
      <rect x="835" y="470" width="7" height="7" fill="#333" />
      <Bearing x={1193} /><Bearing x={1325} />

      <rect x="871" y="753" width="200" height="28" fill={BEAM} /><rect x="871" y="781" width="200" height="4" fill="#7c8794" />
      <path d="M871 750 H1071" />
      <rect x="1071" y="753" width="236" height="28" fill={BEAM} /><rect x="1106" y="781" width="201" height="4" fill="#7c8794" />
      <Leg x={1071} y={750} h={192} /><rect x="1076" y="754" width="40" height="26" fill={BEAM} stroke="none" />
      <path d="M1072 751 L1103 782" strokeWidth="1.600" />
      <path d="M1106 887 H1307" /><rect x="1106" y="890" width="201" height="27" fill={BEAM} /><rect x="1106" y="917" width="201" height="4" fill="#7c8794" />
      <Leg x={1307} y={750} h={192} />
      <rect x="1071" y="743" width="271" height="7" fill="#85847f" /><rect x="1071" y="743" width="7" height="7" fill="#555" />

      <path d="M1148 710 H1161 V723 H1305 V710 H1318 V743 H1148Z" fill="#8b8b88" />
      <rect x="1161" y="719" width="144" height="4" fill="#eceef2" stroke="none" />
      <rect x="1154" y="712" width="158" height="7" fill="#3a3a3c" />
      <circle cx="1233" cy="733" r="9" fill={BEAM} strokeWidth="2" />
      <rect x="1172" y="692" width="17" height="9" fill="#cdbfa4" /><rect x="1278" y="692" width="16" height="9" fill="#cdbfa4" />
      <path d="M1177 692 V701 M1184 692 V701 M1283 692 V701 M1289 692 V701" />
      <path d="M1166 702 H1300 V712 H1271 Q1271 704 1266 704 H1201 Q1196 704 1196 712 H1166Z" fill="#2a2ee6" strokeWidth="1.600" />
      <path d="M1213 710 H1222 M1244 710 H1253" strokeWidth="2" />

      <rect x="1089" y="555" width="101" height="140" rx="2" fill="url(#motor)" strokeWidth="2" />
      <path d="M1095 555 V695" stroke="#11134f" />
      <rect x="1316" y="558" width="20" height="128" rx="2" fill="url(#motor)" stroke="#11134f" />
      <rect x="1190" y="555" width="126" height="140" fill="#12144e" strokeWidth="1.500" />
      {fins.map(([y, h, c]) => <rect key={y} x="1190" y={y} width="126" height={h} fill={c} stroke="none" />)}
      {lowFins.map(([y, h, c]) => <rect key={y} x="1277" y={y} width="39" height={h} fill={c} stroke="none" />)}
      <rect x="1191" y="655" width="85" height="46" fill="#4c56ff" strokeWidth="1.600" />
      <rect x="1222" y="504" width="102" height="52" rx="1" fill="#5058ff" strokeWidth="1.800" />
      <path d="M1222 548 H1324 M1222 553 H1324" stroke="#11134f" />
      <rect x="1230" y="556" width="85" height="18" fill="#4c56ff" stroke="none" />
      <path d="M1339 600 V650" stroke="#2c6a35" strokeWidth="4" />

      <rect x="1342" y="268" width="61" height="92" fill="url(#redTop)" />
      <rect x="1342" y="360" width="61" height="243" fill="#ea6465" />
      <rect x="1342" y="603" width="61" height="70" fill="url(#redLow)" />

      <rect x="867" y="480" width="123" height="172" rx="2" fill="#aeaaa4" strokeWidth="2.500" />
      <circle cx="928" cy="509" r="13" fill="#c9403f" strokeWidth="1.600" stroke="#7a1414" />
      <circle cx="928" cy="509" r="7" fill="#e4423f" stroke="#2a0a0a" strokeWidth="3" strokeDasharray="7 3" />
      <circle cx="900" cy="573" r="9" fill="#f81c20" strokeWidth="3" stroke="#111" />
      <circle cx="955" cy="573" r="9" fill="#12ec22" strokeWidth="3" stroke="#111" />
    </g>
    <Watermark>
      <text x="576" y="564" fontSize="80" fontWeight="100" fontFamily='"Noto Sans CJK SC", sans-serif'>莫西网</text>
      <text y="565" fontSize="66" fontFamily='"Liberation Serif", serif'>
        <tspan x="820">www.</tspan><tspan x="980">3dmox.</tspan><tspan x="1222">com</tspan>
      </text>
    </Watermark>
    <g fontFamily='"Liberation Sans", sans-serif' fontWeight="700" fontSize="5" textAnchor="middle" fill="#111">
      <text x="928" y="493">EMERGENCY STOP</text>
      <text x="900" y="557">OFF</text>
      <text x="955" y="557">ON</text>
    </g>
    <path d="M270 947 V926" stroke="#2f9a36" strokeWidth="4" /><path d="M270 918 L275 928 H265Z" fill="#0d6f16" />
    <path d="M269 948 H248" stroke="#1414a8" strokeWidth="4" /><path d="M241 948 L251 943 V953Z" fill="#1414a8" />
    <circle cx="271" cy="949" r="3" fill="#b01818" />
    <g fontFamily='"Open Sans", sans-serif' fontSize="10"><text x="267" y="912" fill="#2f9a36">Y</text><text x="232" y="949" fill="#1414a8">Z</text></g>
    <text x="240" y="1001" fontFamily='"Noto Sans", sans-serif' fontWeight="700" fontSize="12" fill="#111">*Right</text>
  </Scene>
);

/* ---------- taskbar icons ---------- */
const appIcons: [string, React.ReactNode][] = [
  ["Cortana", <circle cx="11" cy="12" r="7" stroke="#fff" strokeWidth="2" />],
  ["Task View", <path d="M4 5 V2 M4 22 V19 M4 8 H13 V16 H4Z M13 2 V5 H4 M13 22 V19 H4 M18 2 V9 M18 15 V22 M17 12 H19" stroke="#fff" strokeWidth="1.400" />],
  ["Edge", <path d="M2 12 Q4 1 13 1 Q22 2 22 13 H9 Q10 18 15 18 Q19 18 21 16 V21 Q18 23 14 23 Q5 22 5 14 Q6 8 11 7 Q5 7 2 12Z M9 10 H16 Q16 6 12.500 6 Q9 7 9 10Z" fill="#1583d8" fillRule="evenodd" />],
  ["File Explorer", <><path d="M1 3 H9 L11 5 H23 V21 H1Z" fill="#f7c64a" /><path d="M1 8 H23 V21 H1Z" fill="#ffd76b" /><path d="M5 21 V13 H19 V21 H15 V17 H9 V21Z" fill="#3c8fd6" /></>],
  ["Store", <><path d="M1 7 H23 V23 H1Z" fill="#fff" /><path d="M7 7 V2 H17 V7" stroke="#fff" strokeWidth="1.800" /><path d="M8 11 H11.500 V14.500 H8Z" fill="#e5532d" /><path d="M12.500 11 H16 V14.500 H12.500Z" fill="#7db52a" /><path d="M8 15.500 H11.500 V19 H8Z" fill="#2a9fe0" /><path d="M12.500 15.500 H16 V19 H12.500Z" fill="#f4b61e" /></>],
  ["Mail", <><path d="M1 9 L12 1 L23 9 V22 H1Z" fill="#0f6cbd" /><path d="M1 9 H23 L12 17Z" fill="#fff" /><path d="M1 9 L12 17 L23 9 V22 H1Z" fill="#3aaae8" /></>],
  ["Wand", <><path d="M9 9 L22 22" stroke="#888b90" strokeWidth="3" /><path d="M7 1 L9 5 L14 4 L11 8 L14 12 L9 11 L6 15 L5 10 L1 8 L5 6Z" fill="#ffb84a" stroke="#e0602a" strokeWidth="0.800" /></>],
  ["Chrome", <><path d="M12 12 L2.500 6 A11 11 0 0 1 22.500 8Z" fill="#e33b2e" /><path d="M12 12 L22.500 8 A11 11 0 0 1 12 23Z" fill="#fbc116" /><path d="M12 12 L12 23 A11 11 0 0 1 2.500 6Z" fill="#28a045" /><circle cx="12" cy="12" r="5" fill="#fff" /><circle cx="12" cy="12" r="4" fill="#3f7fea" /></>],
  ["Calculator", <><path d="M3 1 H21 V23 H3Z" fill="#6e7b8c" /><path d="M3 1 H21 V6 H3Z" fill="#56b4ea" />{[8, 12, 16, 20].map((y) => <path key={y} d={`M4 ${y} H9 V${y + 2} H4Z M10 ${y} H15 V${y + 2} H10Z`} fill="#e3e8ee" />)}<path d="M16 8 H20 V14 H16Z" fill="#e3e8ee" /><path d="M16 16 H20 V22 H16Z" fill="#2a6fc4" /></>],
  ["Facebook", <><circle cx="12" cy="12" r="11.500" fill="#1a78f2" /><path d="M10.500 23.500 V15 H7.500 V12 H10.500 V9.500 Q10.500 6 14 6 H16.500 V9 H15 Q13.500 9 13.500 10.500 V12 H16.500 L16 15 H13.500 V23.500Z" fill="#fff" /></>],
  ["OBS", <><circle cx="12" cy="12" r="10.500" fill="#2a2a2e" stroke="#a9acb1" strokeWidth="1.500" /><path d="M11 4 Q8 8 12 11 Q16 12 18 9 M5 16 Q10 17 12 12 M18 17 Q18 12 13 12" stroke="#a9acb1" strokeWidth="2" /></>],
];

export default function App() {
  return (
    <App_>
      <Global />
      <TitleBar>
        <Brand><Logo />&nbsp;<span><b>SOLID</b>WORKS</span><BrandArrow /></Brand>
        <QuickBar>
          {quick.map(([n, w, c]) => (
            <React.Fragment key={n}>
              <Quick $w={w} aria-label={n}>{icons[n]}</Quick>
              {c && <Quick $w={21} aria-label={n + " options"}><Caret $c={c} /></Quick>}
            </React.Fragment>
          ))}
          <SelectBox>
            <Quick $w={37} aria-label="select">{icons.cursor}</Quick>
            <Quick $w={18} aria-label="select options"><Caret /></Quick>
          </SelectBox>
          <Quick $w={34} aria-label="rebuild">{icons.traffic}</Quick>
          <Quick $w={50} aria-label="properties">{icons.list}</Quick>
          <Quick $w={28} aria-label="options">{icons.gear}</Quick>
          <Quick $w={28} aria-label="more options"><Caret /></Quick>
        </QuickBar>
        <DocTitle>Assem1 *</DocTitle>
        <SearchCommands>
          <svg width="14" height="14" viewBox="0 0 14 14" aria-hidden="true"><path d="M0 0 H14 V14 H0Z" fill="#1b1b1d" /><path d="M3 3 L7 6.500 L3 10 M8 11 H12" stroke="#fff" strokeWidth="1.600" fill="none" /></svg>
          <input placeholder="Search Commands" aria-label="Search Commands" />
          <svg width="14" height="14" viewBox="0 0 14 14" fill="none" stroke="#85888d" strokeWidth="1.300" aria-hidden="true"><circle cx="5.500" cy="5.500" r="4.500" /><path d="M9 9 L13 13" strokeWidth="2" /></svg>
          <Caret $small $c="#77797d" />
        </SearchCommands>
        <WindowButtons>
          {["user", "help", "min", "restore", "close"].map((k) => <Quick key={k} $w={48} aria-label={k}><WinIcon kind={k} /></Quick>)}
        </WindowButtons>
      </TitleBar>

      <Ribbon>
        {tools.map((t, i) => t ? (
          <Tool key={i} $w={t.w} $on={t.on} $off={t.off}>{icons[t.i]}{t.t}{t.c && <Caret />}</Tool>
        ) : <Sep key={i} />)}
        <Collapse aria-label="Collapse ribbon"><Chevron d={UP} s={14} /></Collapse>
      </Ribbon>
      <TabRow>
        {tabs.map(([t, w], i) => <Tab key={t} $w={w} $on={i === 0}>{t}</Tab>)}
        <DocButtons>
          {["left", "right", "min", "restore", "close"].map((k) => <HudButton key={k} $w={38} aria-label={"document " + k}><WinIcon kind={k} c="#94979b" /></HudButton>)}
        </DocButtons>
      </TabRow>

      <Workspace>
        <Panel>
          <Grip />
          <PanelTabs>
            <PanelTab $on aria-label="Tree"><I><PartShape cube /></I></PanelTab>
            <PanelTab aria-label="Properties"><ListIcon blue /></PanelTab>
            <PanelTab aria-label="Configurations"><I><path d="M4 1 H7 V27 H4Z" fill="#fff" /><path d="M13 2 H23 V11 H13Z M16 17 H26 V26 H16Z M7 6 H13 M7 21 H16" fill="#fff" /></I></PanelTab>
            <PanelTab aria-label="Dimensions"><I><circle cx="14" cy="14" r="10" strokeWidth="2.500" /><path d="M14 0 V28 M0 14 H28" strokeWidth="2" /></I></PanelTab>
            <PanelTab aria-label="Appearances"><I><Ball x={16} y={14} r={12} /></I></PanelTab>
            <TabScroll>
              <button aria-label="Scroll tabs left"><svg width="8" height="8" aria-hidden="true"><path d="M5 1 L2 4 L5 7Z" /></svg></button>
              <button aria-label="Scroll tabs right"><svg width="8" height="8" aria-hidden="true"><path d="M3 1 L6 4 L3 7Z" /></svg></button>
            </TabScroll>
          </PanelTabs>
          <Filter>
            <svg width="18" height="20" viewBox="0 0 18 20" stroke="#2b3e4d" aria-hidden="true"><path d="M1 2 H17 L11 10 V17 L7 19 V10Z" fill="#f4f9fc" /><path d="M1 2 H17 L14 6 H4Z" fill="#4fa6d6" /></svg>
            <Caret $small />
          </Filter>
          <TreeWrap>
            <Tree>
              {tree.map((t, i) => (
                <Node key={i}>
                  <button aria-label="Expand" />
                  {/screw_am|nut_am/.test(t) ? <ScrewSmall /> : <PartSmall />}
                  {t}
                </Node>
              ))}
            </Tree>
            <VScroll><Chevron d={UP} s={10} /><VThumb /><Chevron d={DOWN} s={10} /></VScroll>
          </TreeWrap>
          <HScroll><Chevron d={LEFT} /><HThumb /><Chevron d={RIGHT} /></HScroll>
          <Splitter aria-label="Resize panel" />
        </Panel>
        <Viewport>
          <Hud>
            {hud.map(([n, w, c]) => (
              <React.Fragment key={n}>
                <HudButton $w={w} aria-label={n}>{icons[n]}</HudButton>
                {c && <HudButton $w={12} aria-label={n + " options"}><Caret $c="#94979b" /></HudButton>}
              </React.Fragment>
            ))}
          </Hud>
          <Machine />
        </Viewport>
        <TaskPane>
          {["home2", "library", "folder", "palette", "ball", "props", "forum", "cam"].map((n) => (
            <PaneButton key={n} $on={n === "ball"} aria-label={n}>
              {n === "home2" ? <House /> : n === "props" ? <ListIcon blue /> : icons[n]}
            </PaneButton>
          ))}
        </TaskPane>
      </Workspace>

      <BottomTabs>
        <Blank />
        {["M3 1 V9 M9 1 L5 5 L9 9Z", "M7 1 L3 5 L7 9Z", "M3 1 L7 5 L3 9Z", "M2 1 L6 5 L2 9Z M8 1 V9"].map((d) => (
          <NavButton key={d} aria-label="Scroll studies"><svg width="10" height="10" fill="currentColor" stroke="currentColor" aria-hidden="true"><path d={d} /></svg></NavButton>
        ))}
        <BottomTab $w={58} $on>Model</BottomTab>
        <BottomTab $w={68}>3D Views</BottomTab>
        <BottomTab $w={101}>Motion Study 1</BottomTab>
        <BottomTab $w={108}>Motion Study 2</BottomTab>
      </BottomTabs>
      <Status>
        SOLIDWORKS Premium 2023 SP0.1
        <Grow />
        <StatusItem $w={94}>Under Defined</StatusItem>
        <StatusItem $w={209}>Editing Assembly</StatusItem>
        <StatusItem $w={54}>MMGS</StatusItem>
        <StatusItem $w={33}><svg width="6" height="4" aria-hidden="true"><path d="M0 4 L3 0 L6 4Z" fill="#33363a" /></svg></StatusItem>
        <svg width="15" height="16" viewBox="0 0 15 16" fill="#eef0f2" stroke="#33363a" aria-hidden="true"><path d="M1 4 L8 1 L15 4 V13 L10 15 L1 9Z" /><circle cx="7" cy="6" r="2.500" /><path d="M12 6 L15 12" /></svg>
      </Status>
      <Taskbar>
        <Start aria-label="Start"><svg width="16" height="16" fill="#fff" aria-hidden="true"><path d="M0 2 L7 1 V7.500 H0Z M8 1 L16 0 V7.500 H8Z M0 8.500 H7 V15 L0 14Z M8 8.500 H16 V16 L8 15Z" /></svg></Start>
        <SearchBox>
          <svg width="17" height="18" viewBox="0 0 17 18" fill="none" stroke="#222" strokeWidth="1.400" aria-hidden="true"><circle cx="10.500" cy="6.500" r="5.500" /><path d="M6.500 10.500 L1 17" /></svg>
          <input placeholder="Type here to search" aria-label="Type here to search" />
        </SearchBox>
        <Apps>
          {appIcons.map(([n, s]) => <AppButton key={n} aria-label={n}><svg width="24" height="24" viewBox="0 0 24 24" fill="none" aria-hidden="true">{s}</svg></AppButton>)}
          <AppButton $on aria-label="SOLIDWORKS">
            <svg width="24" height="24" viewBox="0 0 24 24" aria-hidden="true" fontFamily='"Liberation Sans", sans-serif' fontWeight="700" textAnchor="middle" fill="#fff">
              <path d="M1 4 L5 1 H23 V20 L19 23 H1Z" fill="#b3141b" /><path d="M1 4 L5 1 H23 L19 4Z" fill="#e8393f" /><path d="M1 15 H23 V24 H1Z" fill="#1b1b1d" />
              <text x="12" y="14" fontSize="10">SW</text><text x="12" y="23" fontSize="9">2023</text>
            </svg>
          </AppButton>
        </Apps>
        <Tray>
          <TrayItem $w={24} aria-label="Show hidden icons"><svg width="13" height="8" fill="none" stroke="#fff" strokeWidth="1.500" aria-hidden="true"><path d="M1 7 L6.500 1.500 L12 7" /></svg></TrayItem>
          <TrayItem $w={24} aria-label="Battery"><svg width="17" height="14" fill="none" stroke="#fff" strokeWidth="1.200" aria-hidden="true"><path d="M5 5 H15 V11 H5Z" /><path d="M9 7 H13 V9 H9Z" fill="#fff" /><path d="M16 6 V10 M1 1 V4 H5 V1 M3 4 V8 M2 0 V2 M4 0 V2" /></svg></TrayItem>
          <TrayItem $w={25} aria-label="Network"><svg width="14" height="14" fill="none" stroke="#fff" strokeWidth="1.300" aria-hidden="true"><path d="M1 13 A12 12 0 0 1 13 1 M4 13 A9 9 0 0 1 13 4.500 M7 13 A6 6 0 0 1 13 8" /><circle cx="11.500" cy="12" r="1.500" fill="#fff" /></svg></TrayItem>
          <TrayItem $w={24} aria-label="Volume"><svg width="17" height="14" fill="none" stroke="#fff" strokeWidth="1.200" aria-hidden="true"><path d="M1 5 H3 L7 2 V12 L3 9 H1Z M9 5 Q11 7 9 9 M11 3 Q14 7 11 11 M13 1 Q18 7 13 13" /></svg></TrayItem>
          <TrayItem $w={36}>ENG</TrayItem>
          <TrayItem $w={66}><span>20:52<br />22/9/2566</span></TrayItem>
          <TrayItem $w={50} aria-label="Notifications">
            <svg width="24" height="24" viewBox="0 0 24 24" aria-hidden="true"><path d="M1 2 H17 V14 H8 L4 18 V14 H1Z" fill="#fff" /><path d="M4 5 H14 M4 8 H14 M4 11 H10" stroke="#203044" /><circle cx="16" cy="16" r="7.500" fill="#33363a" stroke="#8d9095" /><text x="16" y="20" fontFamily='"Open Sans", sans-serif' fontSize="11" textAnchor="middle" fill="#fff">2</text></svg>
          </TrayItem>
        </Tray>
      </Taskbar>
    </App_>
  );
}
